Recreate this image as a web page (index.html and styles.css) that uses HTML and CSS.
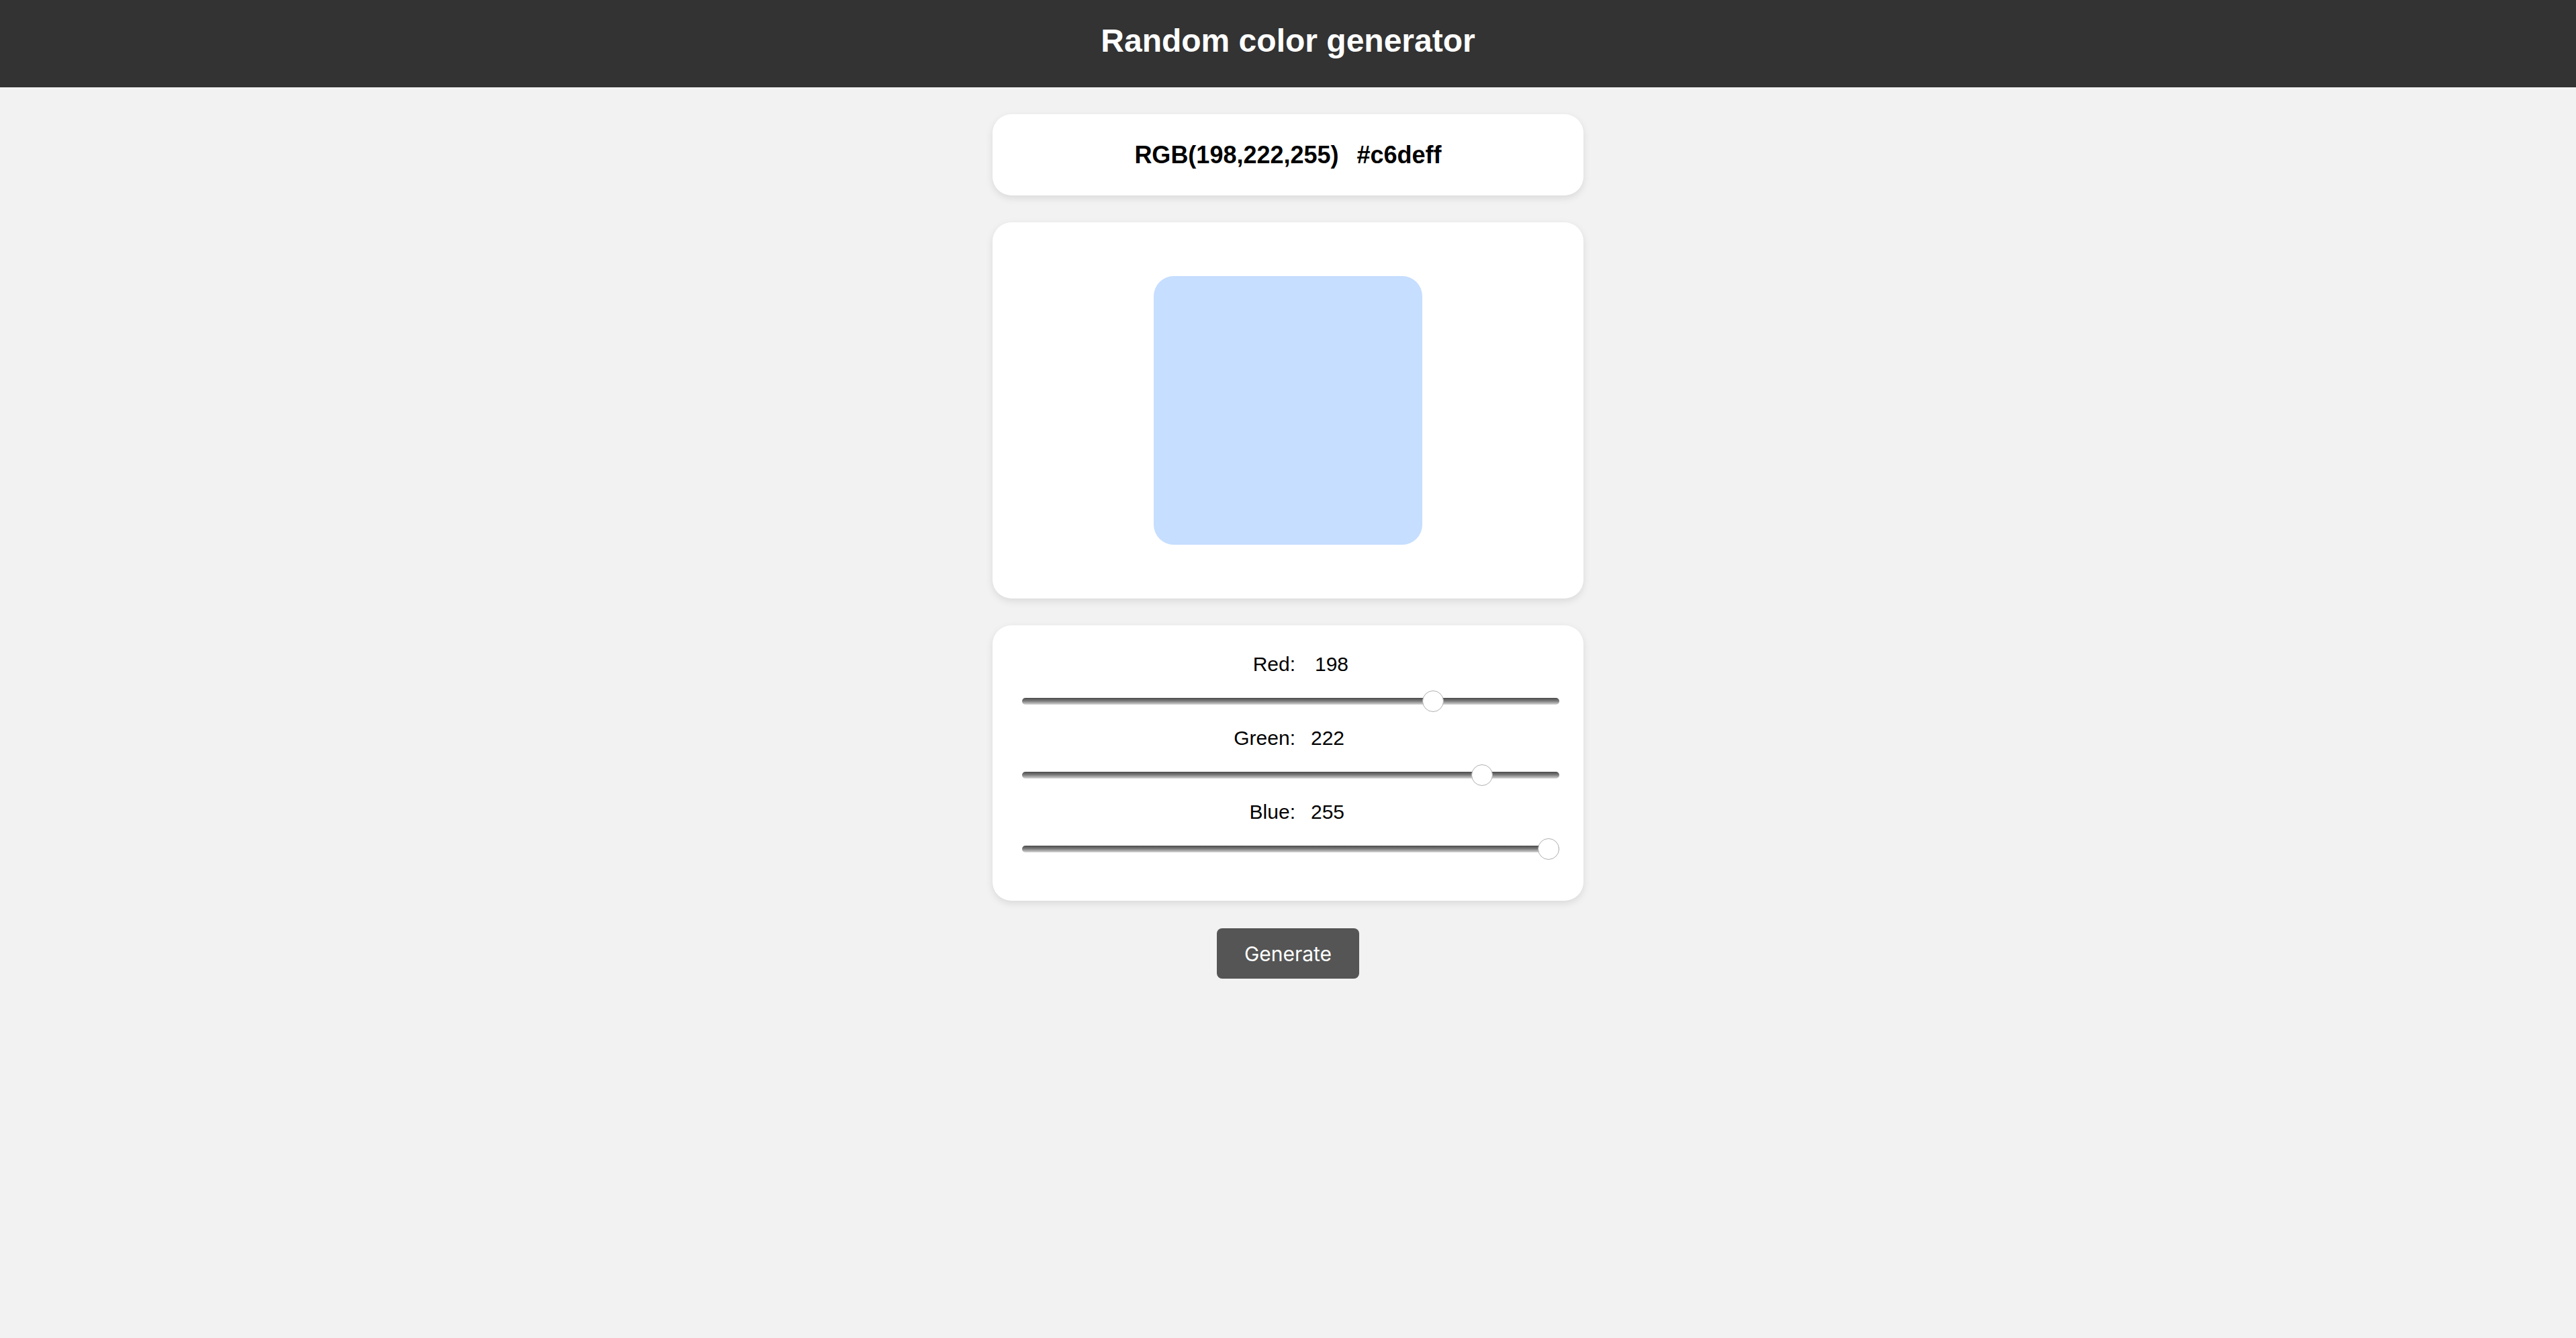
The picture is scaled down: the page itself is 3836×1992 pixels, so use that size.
FILE: index.html
```html
<!DOCTYPE html>
<html lang="en">
<head>
<meta charset="utf-8">
<title>Random color generator</title>
<link rel="stylesheet" href="styles.css">
</head>
<body>
<header class="topbar">
  <h1 class="title">Random color generator</h1>
</header>
<main class="content">
  <section class="card card-code">
    <span class="rgb">RGB(198,222,255)</span><span class="hex">#c6deff</span>
  </section>
  <section class="card card-preview">
    <div class="swatch" style="background-color: rgb(198,222,255);"></div>
  </section>
  <section class="card card-sliders">
    <div class="row">
      <div class="label-line"><span class="lbl">Red:</span><span class="val val-red">198</span></div>
      <input class="slider" type="range" min="0" max="255" value="198">
    </div>
    <div class="row">
      <div class="label-line"><span class="lbl">Green:</span><span class="val">222</span></div>
      <input class="slider" type="range" min="0" max="255" value="222">
    </div>
    <div class="row">
      <div class="label-line"><span class="lbl">Blue:</span><span class="val">255</span></div>
      <input class="slider" type="range" min="0" max="255" value="255">
    </div>
  </section>
  <button class="generate" type="button">Generate</button>
</main>
</body>
</html>
```

FILE: styles.css
```css
* { box-sizing: border-box; }

html, body {
  margin: 0;
  padding: 0;
}

body {
  background: #f2f2f2;
  font-family: "Liberation Sans", Arial, sans-serif;
  color: #000;
  min-height: 1992px;
}

.topbar {
  background: #333333;
  height: 130px;
  padding-top: 33px;
}

.title {
  margin: 0;
  text-align: center;
  color: #ffffff;
  font-size: 48px;
  line-height: 55px;
  font-weight: bold;
}

.content {
  display: flex;
  flex-direction: column;
  align-items: center;
  gap: 40px;
  padding-top: 40px;
}

.card {
  width: 880px;
  background: #ffffff;
  border-radius: 28px;
  box-shadow: 0 4px 12px rgba(0, 0, 0, 0.10);
}

.card-code {
  padding: 40px;
  display: flex;
  justify-content: center;
  align-items: center;
  font-size: 36px;
  font-weight: bold;
  line-height: 41px;
}

.hex {
  margin-left: 27px;
}

.card-preview {
  padding: 80px 0;
  display: flex;
  justify-content: center;
}

.swatch {
  width: 400px;
  height: 400px;
  border-radius: 30px;
}

.card-sliders {
  padding: 40px 36px 40px 44px;
  display: flex;
  flex-direction: column;
}

.row {
  display: flex;
  flex-direction: column;
}

.label-line {
  display: grid;
  grid-template-columns: 407px 74px;
  column-gap: 23px;
  font-size: 30px;
  line-height: 34px;
  margin-bottom: 22px;
  padding-top: 1px;
}

.lbl {
  text-align: right;
}

.val {
  text-align: left;
}

.val-red {
  padding-left: 6px;
}

.slider {
  -webkit-appearance: none;
  appearance: none;
  display: block;
  width: 800px;
  height: 32px;
  margin: 0 0 21px 0;
  padding: 0;
  background: transparent;
}

.slider::-webkit-slider-runnable-track {
  height: 10px;
  border-radius: 5px;
  background: linear-gradient(to bottom, #4a4a4a 0%, #7a7a7a 45%, #d6d6d6 100%);
}

.slider::-webkit-slider-thumb {
  -webkit-appearance: none;
  appearance: none;
  width: 32px;
  height: 32px;
  margin-top: -11px;
  border-radius: 50%;
  background: #ffffff;
  border: 1px solid #b0b0b0;
}

.generate {
  width: 212px;
  height: 75px;
  margin-top: 1px;
  border: none;
  border-radius: 8px;
  background: #555555;
  color: #ffffff;
  font-family: Inter, "Liberation Sans", sans-serif;
  font-size: 30px;
  cursor: pointer;
}
```
